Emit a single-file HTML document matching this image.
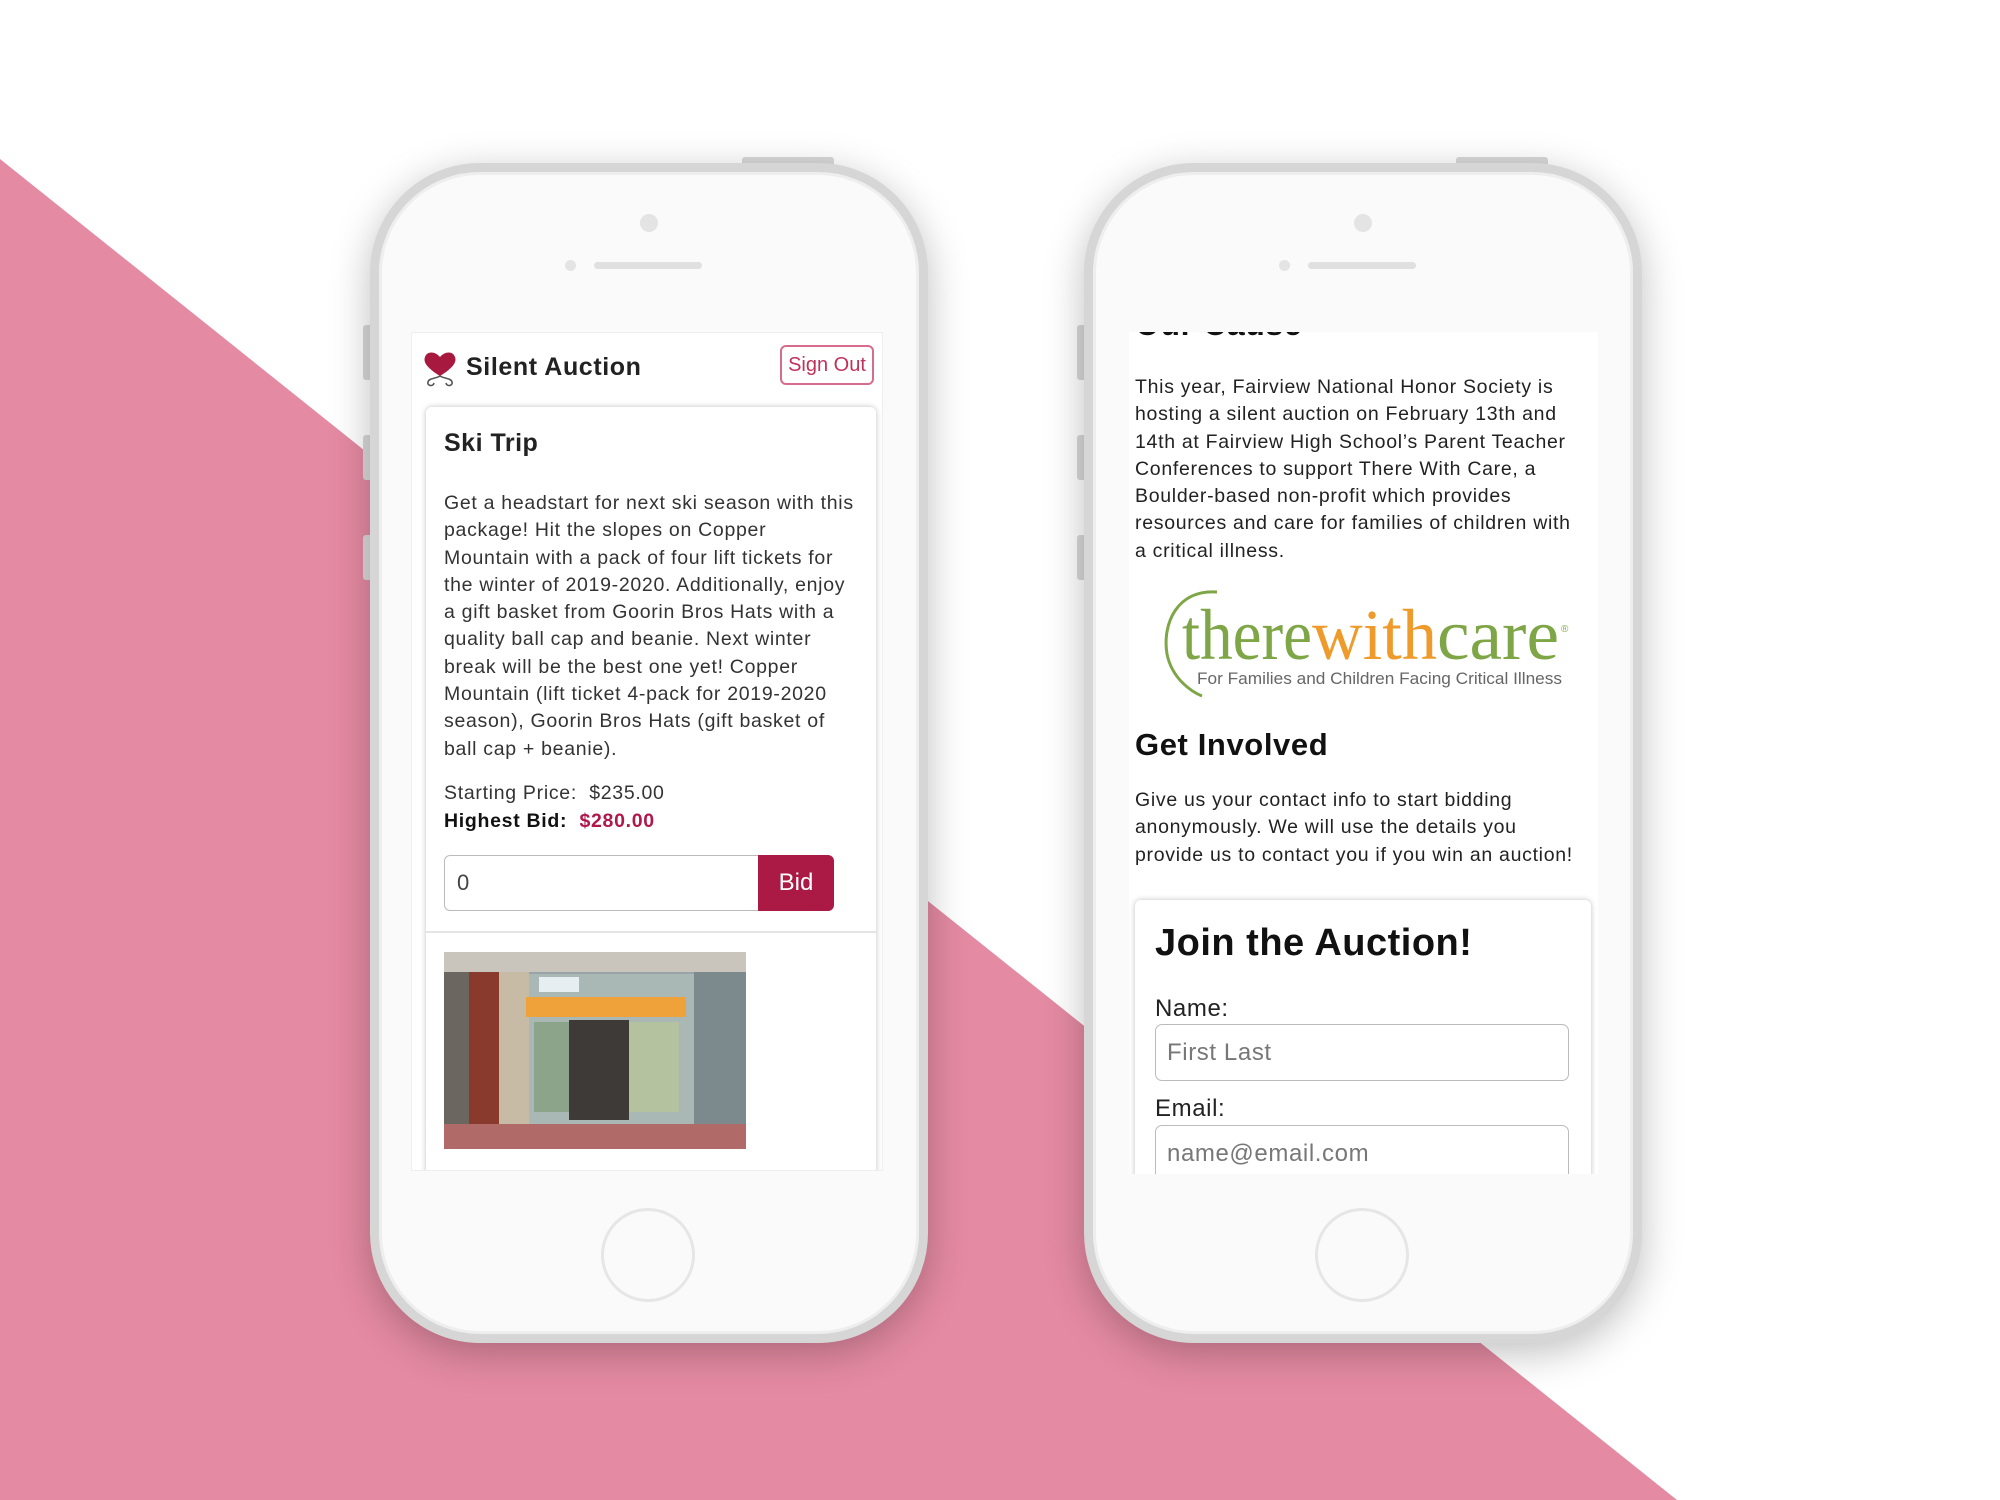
<!DOCTYPE html>
<html><head><meta charset="utf-8"><style>
*{margin:0;padding:0;box-sizing:border-box}
body{width:2000px;height:1500px;overflow:hidden;background:#fff;position:relative;font-family:"Liberation Sans",sans-serif;color:#222}
.a{position:absolute}
.phone{position:absolute;top:163px;width:558px;height:1180px;border-radius:110px;background:#fafafa;border:9px solid #d6d6d6;box-shadow:0 10px 40px rgba(0,0,0,.25),inset 0 0 0 3px #eeeeee}
.btn{position:absolute;background:#d8d8d8;border-radius:3px}
.screen{position:absolute;top:332px;height:839px;background:#fff;overflow:hidden}
.t{position:absolute;white-space:nowrap}
.p{font-size:19.5px;line-height:27.3px;color:#333;letter-spacing:0.7px}
</style></head><body>
<svg class="a" style="left:0;top:0" width="2000" height="1500"><polygon points="0,159 1677,1500 0,1500" fill="#e48aa2"/></svg>

<!-- phone 1 -->
<div class="btn" style="left:742px;top:157px;width:92px;height:12px"></div>
<div class="btn" style="left:363px;top:325px;width:10px;height:55px"></div>
<div class="btn" style="left:363px;top:435px;width:10px;height:45px"></div>
<div class="btn" style="left:363px;top:535px;width:10px;height:45px"></div>
<div class="phone" style="left:370px"></div>
<div class="a" style="left:640px;top:214px;width:18px;height:18px;border-radius:50%;background:#e4e4e4"></div>
<div class="a" style="left:565px;top:260px;width:11px;height:11px;border-radius:50%;background:#e4e4e4"></div>
<div class="a" style="left:594px;top:262px;width:108px;height:7px;border-radius:4px;background:#e0e0e0"></div>
<div class="a" style="left:601px;top:1208px;width:94px;height:94px;border-radius:50%;border:3px solid #e6e6e6"></div>

<div class="screen" style="left:411px;width:472px;border:1px solid #eee">
  <svg class="a" style="left:11px;top:17px" width="34" height="38" viewBox="0 0 34 38">
    <path d="M17 26 C4 18 0 12 2 7 C4 1 12 1 17 7 C22 1 30 1 32 7 C34 12 30 18 17 26Z" fill="#a8193f"/>
    <path d="M17 26 C12 29 6 28 5 32 C4 36 10 37 11 33 M17 26 C22 29 28 28 29 32 C30 36 24 37 23 33" fill="none" stroke="#555" stroke-width="1.6"/>
  </svg>
  <div class="t" style="left:54px;top:20px;font-size:25px;font-weight:bold;color:#222;letter-spacing:0.6px">Silent Auction</div>
  <div class="a" style="left:368px;top:12px;width:94px;height:40px;border:2px solid #d76b8b;border-radius:6px;color:#c0325d;font-size:20px;text-align:center;line-height:36px">Sign Out</div>
  <div class="a" style="left:14px;top:74px;width:450px;height:800px;background:#fff;border-radius:6px;box-shadow:0 0 6px rgba(0,0,0,.25)">
    <div class="t" style="left:18px;top:22px;font-size:25px;font-weight:bold;letter-spacing:0.5px">Ski Trip</div>
    <div class="t p" style="left:18px;top:83px">Get a headstart for next ski season with this<br>package! Hit the slopes on Copper<br>Mountain with a pack of four lift tickets for<br>the winter of 2019-2020. Additionally, enjoy<br>a gift basket from Goorin Bros Hats with a<br>quality ball cap and beanie. Next winter<br>break will be the best one yet! Copper<br>Mountain (lift ticket 4-pack for 2019-2020<br>season), Goorin Bros Hats (gift basket of<br>ball cap + beanie).</div>
    <div class="t p" style="left:18px;top:373px">Starting Price:&nbsp; $235.00</div>
    <div class="t p" style="left:18px;top:401px;font-weight:bold;color:#111">Highest Bid:&nbsp; <span style="color:#b0184a">$280.00</span></div>
    <div class="a" style="left:18px;top:448px;width:316px;height:56px;border:1px solid #bbb;border-radius:6px 0 0 6px;font-size:22px;line-height:54px;padding-left:12px;color:#444">0</div>
    <div class="a" style="left:332px;top:448px;width:76px;height:56px;background:#ab1a45;border-radius:0 6px 6px 0;color:#fff;font-size:24px;text-align:center;line-height:56px">Bid</div>
    <div class="a" style="left:0;top:524px;width:450px;height:2px;background:#e4e4e4"></div>
    <svg class="a" style="left:18px;top:545px" width="302" height="197" viewBox="0 0 302 197">
      <rect width="302" height="197" fill="#9aa4a8"/>
      <rect x="0" y="0" width="302" height="20" fill="#c9c5bc"/>
      <rect x="0" y="20" width="25" height="160" fill="#6b6660"/>
      <rect x="25" y="20" width="30" height="160" fill="#8a3a2c"/>
      <rect x="55" y="20" width="30" height="160" fill="#c8bba6"/>
      <rect x="85" y="22" width="165" height="150" fill="#a9b7b5"/>
      <rect x="95" y="25" width="40" height="15" fill="#e6eef2"/>
      <rect x="82" y="45" width="160" height="20" fill="#f0a23a"/>
      <rect x="125" y="68" width="60" height="100" fill="#3d3a38"/>
      <rect x="90" y="70" width="35" height="90" fill="#8ca58a"/>
      <rect x="185" y="70" width="50" height="90" fill="#b4c2a0"/>
      <rect x="250" y="20" width="52" height="160" fill="#7c8a8e"/>
      <rect x="0" y="172" width="302" height="25" fill="#b06a68"/>
    </svg>
  </div>
</div>

<!-- phone 2 -->
<div class="btn" style="left:1456px;top:157px;width:92px;height:12px"></div>
<div class="btn" style="left:1077px;top:325px;width:10px;height:55px"></div>
<div class="btn" style="left:1077px;top:435px;width:10px;height:45px"></div>
<div class="btn" style="left:1077px;top:535px;width:10px;height:45px"></div>
<div class="phone" style="left:1084px"></div>
<div class="a" style="left:1354px;top:214px;width:18px;height:18px;border-radius:50%;background:#e4e4e4"></div>
<div class="a" style="left:1279px;top:260px;width:11px;height:11px;border-radius:50%;background:#e4e4e4"></div>
<div class="a" style="left:1308px;top:262px;width:108px;height:7px;border-radius:4px;background:#e0e0e0"></div>
<div class="a" style="left:1315px;top:1208px;width:94px;height:94px;border-radius:50%;border:3px solid #e6e6e6"></div>

<div class="screen" style="left:1129px;width:469px;top:332px;height:842px">
  <div class="t" style="left:6px;top:-26px;font-size:32px;font-weight:bold;color:#111;letter-spacing:0.6px">Our Cause</div>
  <div class="t p" style="left:6px;top:42px;color:#222">This year, Fairview National Honor Society is<br>hosting a silent auction on February 13th and<br>14th at Fairview High School’s Parent Teacher<br>Conferences to support There With Care, a<br>Boulder-based non-profit which provides<br>resources and care for families of children with<br>a critical illness.</div>
  <svg class="a" style="left:28px;top:252px" width="420" height="115" viewBox="0 0 420 115">
    <path d="M60 8 C20 5 5 40 10 70 C15 95 35 108 45 112" fill="none" stroke="#7ea646" stroke-width="3"/>
    <text x="25" y="75" font-family="Liberation Serif,serif" font-size="72" fill="#7ea646" textLength="130" lengthAdjust="spacingAndGlyphs">there</text>
    <text x="155" y="75" font-family="Liberation Serif,serif" font-size="72" fill="#ef9b2c" textLength="125" lengthAdjust="spacingAndGlyphs">with</text>
    <text x="280" y="75" font-family="Liberation Serif,serif" font-size="72" fill="#7ea646" textLength="122" lengthAdjust="spacingAndGlyphs">care</text>
    <text x="404" y="48" font-size="10" fill="#7ea646">®</text>
    <text x="40" y="100" font-family="Liberation Sans,sans-serif" font-size="17" fill="#666" textLength="365" lengthAdjust="spacingAndGlyphs">For Families and Children Facing Critical Illness</text>
  </svg>
  <div class="t" style="left:6px;top:395px;font-size:31px;font-weight:bold;color:#111;letter-spacing:0.6px">Get Involved</div>
  <div class="t p" style="left:6px;top:455px;color:#222">Give us your contact info to start bidding<br>anonymously. We will use the details you<br>provide us to contact you if you win an auction!</div>
  <div class="a" style="left:6px;top:568px;width:456px;height:320px;background:#fff;border-radius:6px;box-shadow:0 0 6px rgba(0,0,0,.25)">
    <div class="t" style="left:20px;top:22px;font-size:38px;font-weight:bold;color:#111;letter-spacing:0.5px">Join the Auction!</div>
    <div class="t" style="left:20px;top:95px;font-size:24px;color:#222;letter-spacing:0.6px">Name:</div>
    <div class="a" style="left:20px;top:124px;width:414px;height:57px;border:1px solid #bbb;border-radius:7px;font-size:24px;line-height:55px;padding-left:11px;color:#777;letter-spacing:0.6px">First Last</div>
    <div class="t" style="left:20px;top:195px;font-size:24px;color:#222;letter-spacing:0.6px">Email:</div>
    <div class="a" style="left:20px;top:225px;width:414px;height:57px;border:1px solid #bbb;border-radius:7px;font-size:24px;line-height:55px;padding-left:11px;color:#777;letter-spacing:0.6px">name@email.com</div>
  </div>
</div>
</body></html>
